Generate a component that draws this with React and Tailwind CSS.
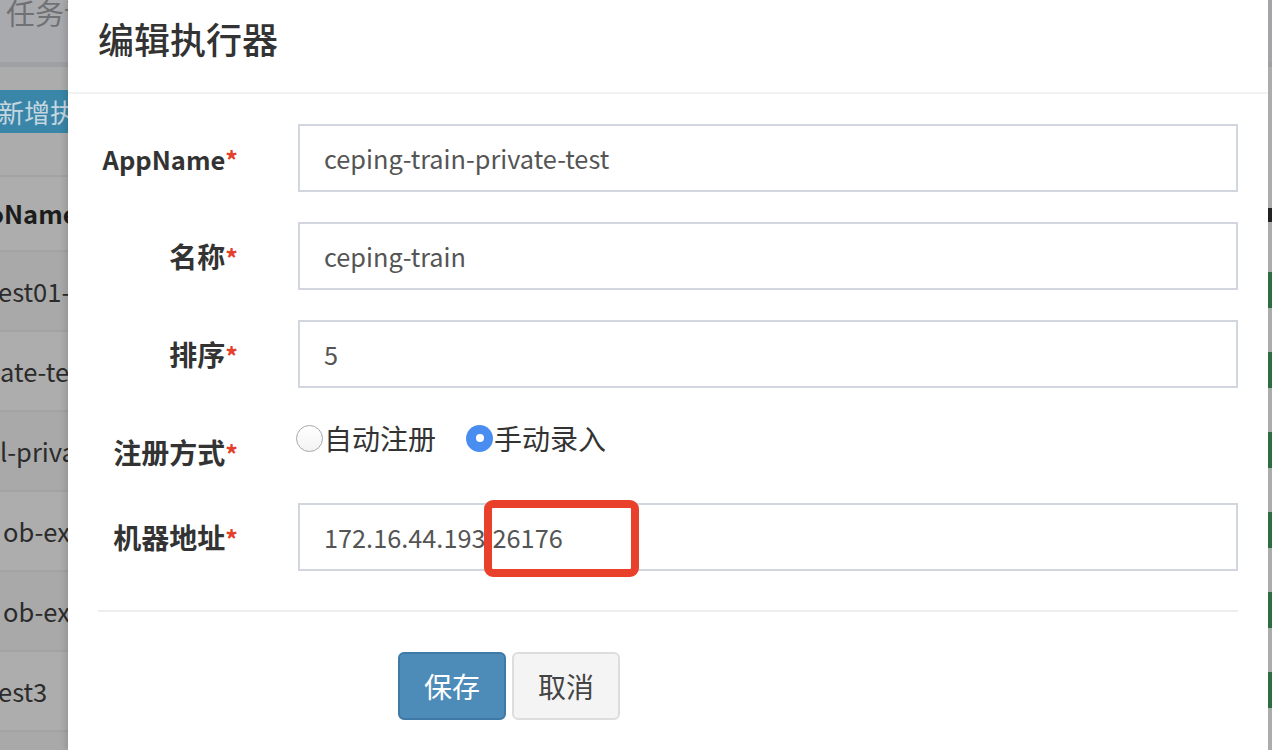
import React from 'react';

const bgRows = [
  { text: 'est01-executor', shift: 'ml-[-2px]', shade: 'bg-[#a9a9a9]' },
  { text: 'ate-test', shift: 'ml-[0px]', shade: 'bg-[#adadad]' },
  { text: 'l-private-test', shift: 'ml-[0px]', shade: 'bg-[#a9a9a9]' },
  { text: 'ob-executor', shift: 'ml-[3px]', shade: 'bg-[#adadad]' },
  { text: 'ob-executor', shift: 'ml-[3px]', shade: 'bg-[#a9a9a9]' },
  { text: 'est3', shift: 'ml-[-2px]', shade: 'bg-[#adadad]' },
  { text: '', shift: 'ml-[0px]', shade: 'bg-[#a9a9a9]' },
];

const fields = [
  { label: 'AppName', value: 'ceping-train-private-test', latin: true },
  { label: '名称', value: 'ceping-train' },
  { label: '排序', value: '5' },
];

const Label = ({ children, latin }) => (
  <div className="w-[140px] flex-none pt-[14px] text-right text-[28px] leading-[40px] font-bold text-[#333]">
    <span className={latin ? 'text-[25.5px]' : ''}>{children}</span>
    <span className="text-[25px] text-[#e4402c]">*</span>
  </div>
);

const Radio = ({ checked, children }) => (
  <label className="flex items-center text-[28px] leading-[40px] text-[#333]">
    {checked ? (
      <span className="w-[27px] h-[27px] rounded-full bg-[#4a8df0] flex items-center justify-center">
        <span className="w-[8px] h-[8px] rounded-full bg-white" />
      </span>
    ) : (
      <span className="w-[27px] h-[27px] rounded-full border border-[#a8a8a8] bg-gradient-to-b from-white to-[#f3f3f3]" />
    )}
    <span className="ml-[1px]">{children}</span>
  </label>
);

function LeftStrip() {
  return (
    <div className="w-[68px] flex-none flex flex-col overflow-hidden">
      <div className="h-[62px] flex-none bg-[#a9aaad] overflow-hidden">
        <div className="mt-[-3px] ml-[6px] whitespace-nowrap text-[29px] leading-[30px] text-[#707174]">任务调度中心</div>
      </div>
      <div className="h-[5px] flex-none bg-[#9fa0a3]" />
      <div className="h-[108px] flex-none bg-[#acacac] pt-[23px]">
        <div className="h-[43px] ml-[-10px] pl-[8px] w-[140px] bg-[#3a86a8] whitespace-nowrap text-[26px] leading-[43px] text-[#c4d6e0]">
          新增执行器
        </div>
      </div>
      <div className="h-[75px] flex-none border-t-2 border-[#a3a3a3] bg-[#adadad] flex items-center">
        <span className="ml-[-12px] whitespace-nowrap text-[25.5px] font-bold text-[#1c1c1c]">oName</span>
      </div>
      {bgRows.map((row, i) => (
        <div key={i} className={`h-[80px] flex-none border-t-2 border-[#a3a3a3] flex items-center ${row.shade}`}>
          <span className={`whitespace-nowrap text-[25.5px] text-[#2b2b2b] ${row.shift}`}>{row.text}</span>
        </div>
      ))}
    </div>
  );
}

function RightStrip() {
  return (
    <div className="flex-1 flex flex-col overflow-hidden bg-[#acacac]">
      <div className="h-[62px] flex-none bg-[#a3a4a7]" />
      <div className="h-[5px] flex-none bg-[#9fa0a3]" />
      <div className="h-[141px] flex-none" />
      <div className="h-[14px] flex-none bg-[#222]" />
      {[0, 1, 2, 3, 4, 5].map((i) => (
        <div key={i} className={`h-[36px] flex-none bg-[#2e6d42] ${i === 0 ? 'mt-[50px]' : 'mt-[44px]'}`} />
      ))}
    </div>
  );
}

export default function App() {
  return (
    <div className="w-[1272px] h-[750px] overflow-hidden flex bg-[#acacac] font-['Noto_Sans_CJK_SC',sans-serif]">
      <LeftStrip />

      <div className="w-[1200px] flex-none bg-white flex flex-col shadow-[-3px_0_6px_rgba(0,0,0,0.12)]">
        {/* header */}
        <div className="h-[94px] flex-none border-b-2 border-[#f2f2f2] pt-[18px] pl-[30px]">
          <h4 className="text-[36px] leading-[40px] font-medium text-[#333]">编辑执行器</h4>
        </div>

        {/* form */}
        <div className="px-[30px] pt-[30px]">
          {fields.map((f) => (
            <div key={f.label} className="flex gap-[60px] mb-[30px]">
              <Label latin={f.latin}>{f.label}</Label>
              <input
                readOnly
                value={f.value}
                className="flex-1 h-[68px] border-2 border-[#d2d6de] bg-white px-[24px] text-[25.3px] text-[#555] outline-none"
              />
            </div>
          ))}

          <div className="flex gap-[60px] mb-[30px] h-[55px]">
            <Label>注册方式</Label>
            <div className="flex items-start gap-[30px] ml-[-2px] pt-[0px]">
              <Radio>自动注册</Radio>
              <Radio checked>手动录入</Radio>
            </div>
          </div>

          <div className="flex gap-[60px]">
            <Label>机器地址</Label>
            <div className="flex-1 relative">
              <input
                readOnly
                value="172.16.44.193:26176"
                className="w-full h-[68px] border-2 border-[#d2d6de] bg-white px-[24px] text-[25.3px] text-[#555] outline-none"
              />
              {/* annotation box */}
              <div className="absolute left-[186px] top-[-3px] w-[155px] h-[77px] border-[8px] border-[#e8402b] rounded-[9px]" />
            </div>
          </div>

          <div className="mt-[39px] h-[2px] bg-[#eeeeee]" />

          <div className="mt-[40px] pl-[300px] flex gap-[6px]">
            <button className="w-[108px] h-[68px] rounded-[6px] border-2 border-[#3f79a5] bg-[#4d8bb9] text-[28px] text-white">
              保存
            </button>
            <button className="w-[108px] h-[68px] rounded-[6px] border-2 border-[#dddddd] bg-[#f4f4f4] text-[28px] text-[#444]">
              取消
            </button>
          </div>
        </div>
      </div>

      <RightStrip />
    </div>
  );
}
